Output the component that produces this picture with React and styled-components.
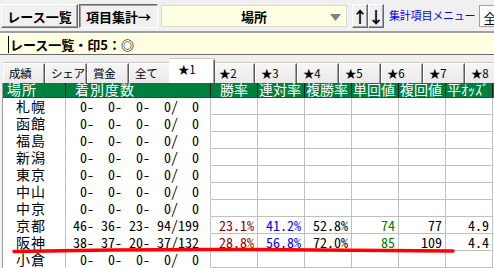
import React from 'react';
import styled, { createGlobalStyle } from 'styled-components';

const Global = createGlobalStyle`
  html, body { margin: 0; padding: 0; background: #f0f0f0; overflow: hidden; }
  body { font-family: "Noto Sans CJK JP", sans-serif; color: #000; }
`;

const Page = styled.div`
  position: relative;
  width: 494px;
  height: 268px;
  overflow: hidden;
  background: #f0f0f0;
`;

const Toolbar = styled.div`
  display: flex;
  align-items: flex-start;
  height: 31px;
  box-sizing: border-box;
  padding: 4px 0 0 1px;
  overflow: hidden;
  & > * { flex: none; }
`;

const ToolButton = styled.div`
  box-sizing: border-box;
  width: ${(p) => p.$w}px;
  height: 24px;
  margin-right: ${(p) => p.$mr || 0}px;
  display: flex;
  align-items: center;
  justify-content: center;
  background: #f0f0f0;
  font-weight: bold;
  font-size: ${(p) => p.$fs || 13}px;
  line-height: 1;
  border: 1px solid;
  border-color: ${(p) => (p.$pressed ? '#696969 #fff #fff #696969' : '#fff #696969 #696969 #fff')};
  box-shadow: ${(p) => (p.$pressed ? 'inset 1px 1px #a0a0a0' : 'inset -1px -1px #a0a0a0')};
  white-space: nowrap;
`;

const Combo = styled.div`
  box-sizing: border-box;
  width: 186px;
  height: 22px;
  margin: 1px 5px 0 3px;
  background: #ffffe1;
  border: 1px solid #d8d8d8;
  display: flex;
  align-items: center;
  position: relative;
  font-weight: bold;
  font-size: 13px;
`;

const ComboText = styled.span`
  flex: 1;
  text-align: center;
`;

const ComboArrow = styled.svg`
  position: absolute;
  right: 5px;
  top: 8px;
`;

const MenuLink = styled.span`
  font-size: 11px;
  line-height: 16px;
  color: #0000ff;
  letter-spacing: -0.2px;
  margin: 3px 4px 0 5px;
  white-space: nowrap;
`;

const AllBox = styled.div`
  box-sizing: border-box;
  width: 30px;
  height: 22px;
  margin-top: 1px;
  background: #fff;
  border: 1px solid #a0a0a0;
  border-right: none;
  font-size: 13px;
  padding: 2px 0 0 3px;
  overflow: hidden;
`;

const InfoBar = styled.div`
  height: 24px;
  box-sizing: border-box;
  border-top: 2px solid #a0a0a0;
  border-bottom: 1px solid #696969;
  background: #ffffe1;
  padding: 2px 0 0 8px;
  display: flex;
  align-items: center;
`;

const InfoText = styled.div`
  border-left: 1px solid #000;
  padding-left: 1px;
  height: 17px;
  line-height: 17px;
  font-weight: bold;
  font-size: 13px;
  white-space: nowrap;
`;

const TabStrip = styled.div`
  display: flex;
  align-items: flex-end;
  height: 28px;
  padding-left: 3px;
  box-sizing: border-box;
  overflow: hidden;
`;

const Tab = styled.div`
  flex: none;
  position: relative;
  box-sizing: border-box;
  width: ${(p) => (p.$active ? 46 : 42)}px;
  height: ${(p) => (p.$active ? 24 : 20)}px;
  margin: 0 ${(p) => (p.$active ? -2 : 0)}px;
  z-index: ${(p) => (p.$active ? 2 : 1)};
  background: ${(p) => (p.$active ? '#fff' : 'linear-gradient(#f6f6f6, #e9e9e9)')};
  border-top: 1px solid #fff;
  border-left: 1px solid #fff;
  border-right: 1px solid #5a5a5a;
  box-shadow: inset -1px 0 #a0a0a0, 0 -1px #c8c8c8;
  font-size: 11.5px;
  line-height: ${(p) => (p.$active ? 18 : 19)}px;
  padding-left: ${(p) => (p.$active ? 8 : 5)}px;
  letter-spacing: -0.3px;
  white-space: nowrap;
  overflow: hidden;
`;

const Grid = styled.div`
  margin-left: 2px;
  border-left: 1px solid #a0a0a0;
  width: 491px;
`;

const COLS = '63px 145px 47px 47px 47px 47px 47px 47px';

const HeadRow = styled.div`
  display: grid;
  grid-template-columns: ${COLS};
  height: 15px;
  background: #00803f;
  border-bottom: 1px solid #00602f;
  box-sizing: border-box;
`;

const HeadCell = styled.div`
  box-sizing: border-box;
  border-right: 1px solid #1b1b1b;
  color: #fff;
  font-size: 14px;
  line-height: 13px;
  padding-left: ${(p) => p.$pl}px;
  letter-spacing: ${(p) => p.$ls || 0}px;
  white-space: nowrap;
`;

const Row = styled.div`
  display: grid;
  grid-template-columns: ${COLS};
  height: 17px;
  background: #fff;
`;

const Cell = styled.div`
  box-sizing: border-box;
  border-right: 1px solid #c0c0c0;
  border-bottom: 1px solid ${(p) => (p.$lined ? '#c0c0c0' : 'transparent')};
  height: 17px;
  font-size: 14px;
  line-height: 16px;
  white-space: pre;
`;

const NameCell = styled(Cell)`
  padding-left: 13px;
  letter-spacing: 1px;
`;

const MonoCell = styled(Cell)`
  font-family: "Noto Sans Mono CJK JP", "Liberation Mono", monospace;
  padding-left: ${(p) => p.$pl || 0}px;
  padding-right: ${(p) => (p.$right ? 3 : 0)}px;
  text-align: ${(p) => (p.$right ? 'right' : 'left')};
  color: ${(p) => p.$color || '#000'};
`;

const Mark = styled.svg`
  position: absolute;
  left: 0;
  top: 0;
  pointer-events: none;
`;

const pad = (n, w) => String(n).padStart(w, ' ');

const places = [
  ['札幌'], ['函館'], ['福島'], ['新潟'], ['東京'], ['中山'], ['中京'],
  ['京都', [46, 36, 23, 94, 199], ['23.1%', '41.2%', '52.8%', '74', '77', '4.9']],
  ['阪神', [38, 37, 20, 37, 132], ['28.8%', '56.8%', '72.0%', '85', '109', '4.4']],
  ['小倉'],
];

const statColors = ['#8b0000', '#0000ff', '#000', '#008000', '#000', '#000'];

const headers = [
  { t: '場所', pl: 4, ls: 1 },
  { t: '着別度数', pl: 9, ls: 1 },
  { t: '勝率', pl: 9 },
  { t: '連対率', pl: 1 },
  { t: '複勝率', pl: 1 },
  { t: '単回値', pl: 1 },
  { t: '複回値', pl: 1 },
  { t: '平ｵｯｽﾞ', pl: 1 },
];

const tabs = ['成績', 'シェア', '賞金', '全て', '★1', '★2', '★3', '★4', '★5', '★6', '★7', '★8'];

export default function App() {
  return (
    <Page>
      <Global />
      <Toolbar>
        <ToolButton $w={77} $mr={1}>レース一覧</ToolButton>
        <ToolButton $w={79} $pressed>項目集計→</ToolButton>
        <Combo>
          <ComboText>場所</ComboText>
          <ComboArrow width="11" height="7" viewBox="0 0 11 7">
            <polygon points="0,0 11,0 5.5,7" fill="#808080" />
          </ComboArrow>
        </Combo>
        <ToolButton $w={16} $fs={16}>↑</ToolButton>
        <ToolButton $w={16} $fs={16}>↓</ToolButton>
        <MenuLink>集計項目メニュー</MenuLink>
        <AllBox>全</AllBox>
      </Toolbar>
      <InfoBar>
        <InfoText>レース一覧・印5：◎</InfoText>
      </InfoBar>
      <TabStrip>
        {tabs.map((t, i) => (
          <Tab key={t} $active={i === 4}>{t}</Tab>
        ))}
      </TabStrip>
      <Grid>
        <HeadRow>
          {headers.map((h) => (
            <HeadCell key={h.t} $pl={h.pl} $ls={h.ls}>{h.t}</HeadCell>
          ))}
        </HeadRow>
        {places.map(([name, rec, stats]) => {
          const r = rec || [0, 0, 0, 0, 0];
          const txt = `${pad(r[0], 2)}-${pad(r[1], 3)}-${pad(r[2], 3)}-${pad(r[3], 3)}/${pad(r[4], 3)}`;
          return (
            <Row key={name}>
              <NameCell>{name}</NameCell>
              <MonoCell $pl={7}>{txt}</MonoCell>
              {statColors.map((c, i) => (
                <MonoCell key={i} $lined $right $color={c}>{stats ? stats[i] : ''}</MonoCell>
              ))}
            </Row>
          );
        })}
      </Grid>
      <Mark width="494" height="268" viewBox="0 0 494 268">
        <path d="M14 251.5 Q 130 249 250 249.5 T 453 251" stroke="#ff0000" strokeWidth="3.5" fill="none" strokeLinecap="round" />
      </Mark>
    </Page>
  );
}
